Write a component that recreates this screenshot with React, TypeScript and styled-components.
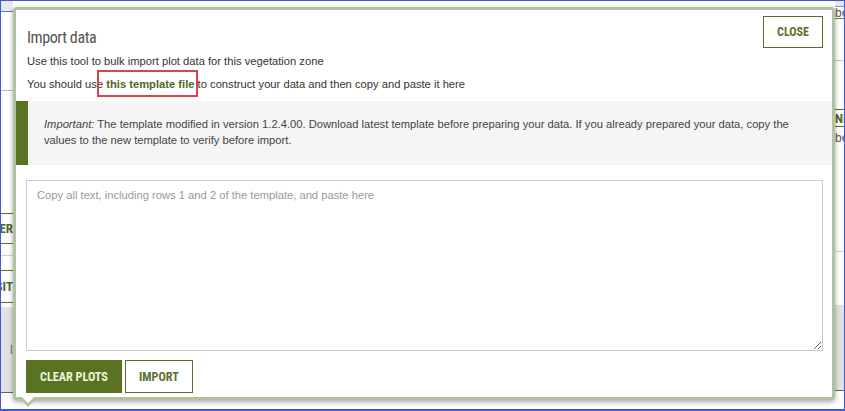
import React from "react";
import styled, { createGlobalStyle } from "styled-components";

const GlobalStyle = createGlobalStyle`
  html, body { margin: 0; padding: 0; background: #fff; }
  body { font-family: "Liberation Sans", Arial, sans-serif; }
  * { box-sizing: border-box; }
`;

const OLIVE = "#5a7323";
const NARROW = `"Liberation Sans Narrow", "Roboto Condensed", "DejaVu Sans Condensed", Roboto, sans-serif`;

const Frame = styled.div`
  position: relative;
  width: 845px;
  height: 411px;
  border: 1px solid #3f57d8;
  border-bottom-width: 2px;
  overflow: hidden;
  display: flex;
  background: #fff;
`;

const Backdrop = styled.div`
  flex: 1;
  display: flex;
`;

const EdgeColumn = styled.div<{ $w: number }>`
  width: ${(p) => p.$w}px;
  display: flex;
  flex-direction: column;
  overflow: hidden;
`;

const Middle = styled.div`
  flex: 1;
  background: #fff;
`;

const StripRow = styled.div<{
  $h: number;
  $bg?: string;
  $line?: string;
  $align?: "start" | "end";
}>`
  height: ${(p) => p.$h}px;
  flex-shrink: 0;
  background: ${(p) => p.$bg || "#fff"};
  border-bottom: ${(p) => (p.$line ? `1px solid ${p.$line}` : "none")};
  display: flex;
  align-items: center;
  justify-content: ${(p) => (p.$align === "start" ? "flex-start" : "flex-end")};
  white-space: nowrap;
`;

const StripLabel = styled.span<{ $kind?: "head" | "plain" | "dim" }>`
  font-family: ${(p) => (p.$kind === "head" ? NARROW : `"Liberation Sans", Arial, sans-serif`)};
  font-weight: ${(p) => (p.$kind === "head" ? 700 : 400)};
  font-size: ${(p) => (p.$kind === "head" ? "13px" : "12px")};
  color: ${(p) => (p.$kind === "head" ? "#4e6a2b" : p.$kind === "dim" ? "#777" : "#555")};
`;

const Dialog = styled.div`
  position: absolute;
  left: 12px;
  top: 6px;
  width: 822px;
  height: 393px;
  background: #fff;
  border: 3px solid #b4c0a2;
  border-radius: 4px;
  box-shadow: 0 2px 5px rgba(0, 0, 0, 0.35);
  display: flex;
  flex-direction: column;

  &::before {
    content: "";
    position: absolute;
    left: 4px;
    bottom: -10px;
    border-left: 8px solid transparent;
    border-right: 8px solid transparent;
    border-top: 8px solid #b4c0a2;
  }
  &::after {
    content: "";
    position: absolute;
    left: 6px;
    bottom: -6px;
    border-left: 6px solid transparent;
    border-right: 6px solid transparent;
    border-top: 6px solid #fff;
  }
`;

const Header = styled.div`
  display: flex;
  justify-content: space-between;
  align-items: flex-start;
  padding: 6px 9px 0 11px;
`;

const TitleBlock = styled.div`
  display: flex;
  flex-direction: column;
`;

const Title = styled.h2`
  margin: 12px 0 0;
  font-family: ${NARROW};
  font-weight: 400;
  font-size: 16px;
  letter-spacing: -0.4px;
  line-height: 20px;
  color: #555;
`;

const Intro = styled.p<{ $gap: number }>`
  margin: ${(p) => p.$gap}px 0 0;
  font-size: 11.2px;
  line-height: 16px;
  color: #333;
`;

const TemplateLink = styled.a`
  position: relative;
  font-weight: 700;
  color: #4a6a1c;
  text-decoration: none;

  &::after {
    content: "";
    position: absolute;
    left: -9px;
    right: -3px;
    top: -8px;
    bottom: -7px;
    border: 2px solid #d4454c;
    pointer-events: none;
  }
`;

const CloseButton = styled.button`
  width: 60px;
  height: 32px;
  padding: 0;
  background: #fff;
  border: 1px solid ${OLIVE};
  font-family: ${NARROW};
  font-weight: 700;
  font-size: 12px;
  color: #5b6e2e;
  cursor: pointer;
`;

const Notice = styled.div`
  margin-top: 9px;
  height: 64px;
  background: #f5f5f5;
  border-left: 12px solid ${OLIVE};
  padding: 15px 32px 0 16px;
  font-size: 11.2px;
  line-height: 16px;
  color: #444;
`;

const Emph = styled.em`
  font-style: italic;
`;

const PasteArea = styled.textarea`
  display: block;
  margin: 15px 9px 0 10px;
  height: 171px;
  border: 1px solid #ccc;
  padding: 6px 10px;
  font-family: "Liberation Sans", Arial, sans-serif;
  font-size: 11.2px;
  line-height: 16px;
  color: #333;
  resize: vertical;
  outline: none;

  &::placeholder {
    color: #999;
  }
`;

const ButtonRow = styled.div`
  display: flex;
  gap: 3px;
  margin: 9px 0 0 10px;
`;

const ActionButton = styled.button<{ $primary?: boolean }>`
  height: 33px;
  padding: 0 13px;
  background: ${(p) => (p.$primary ? OLIVE : "#fff")};
  border: 1px solid ${OLIVE};
  color: ${(p) => (p.$primary ? "#eef3dc" : "#5b6e2e")};
  font-family: ${NARROW};
  font-weight: 700;
  font-size: 12.2px;
  cursor: pointer;
`;

export default function App() {
  return (
    <>
      <GlobalStyle />
      <Frame>
        <Backdrop>
          <EdgeColumn $w={12}>
            <StripRow $h={11} $bg="#e8e8ec" $line="#6271c2" />
            <StripRow $h={79} $line="#b8b8b8" />
            <StripRow $h={123} $line={OLIVE} />
            <StripRow $h={30} $line={OLIVE}>
              <StripLabel $kind="head">ER</StripLabel>
            </StripRow>
            <StripRow $h={12} $line="#d0d0d0" />
            <StripRow $h={15} $line={OLIVE} />
            <StripRow $h={32} $line={OLIVE}>
              <StripLabel $kind="head">SIT</StripLabel>
            </StripRow>
            <StripRow $h={4} />
            <StripRow $h={86} $bg="#e2e2e2" $line="#666">
              <StripLabel $kind="dim">I</StripLabel>
            </StripRow>
            <StripRow $h={10} />
          </EdgeColumn>
          <Middle />
          <EdgeColumn $w={9}>
            <StripRow $h={6} $bg="#e8e8ec" $line="#8a93c8" />
            <StripRow $h={12} $line="#6f8a4a" $align="start">
              <StripLabel>be</StripLabel>
            </StripRow>
            <StripRow $h={42} $line="#c8c8c8" />
            <StripRow $h={49} $line={OLIVE} />
            <StripRow $h={17} $line={OLIVE} $align="start">
              <StripLabel $kind="head">NE</StripLabel>
            </StripRow>
            <StripRow $h={22} $align="start">
              <StripLabel>be</StripLabel>
            </StripRow>
            <StripRow $h={103} $line="#d0d0d0" />
            <StripRow $h={53} />
            <StripRow $h={86} $bg="#e2e2e2" $line="#666" />
            <StripRow $h={10} />
          </EdgeColumn>
        </Backdrop>

        <Dialog>
          <Header>
            <TitleBlock>
              <Title>Import data</Title>
              <Intro $gap={5}>Use this tool to bulk import plot data for this vegetation zone</Intro>
              <Intro $gap={7}>
                You should use <TemplateLink href="#">this template file</TemplateLink> to construct
                your data and then copy and paste it here
              </Intro>
            </TitleBlock>
            <CloseButton>CLOSE</CloseButton>
          </Header>
          <Notice>
            <Emph>Important:</Emph> The template modified in version 1.2.4.00. Download latest
            template before preparing your data. If you already prepared your data, copy the
            values to the new template to verify before import.
          </Notice>
          <PasteArea placeholder="Copy all text, including rows 1 and 2 of the template, and paste here" />
          <ButtonRow>
            <ActionButton $primary>CLEAR PLOTS</ActionButton>
            <ActionButton>IMPORT</ActionButton>
          </ButtonRow>
        </Dialog>
      </Frame>
    </>
  );
}
